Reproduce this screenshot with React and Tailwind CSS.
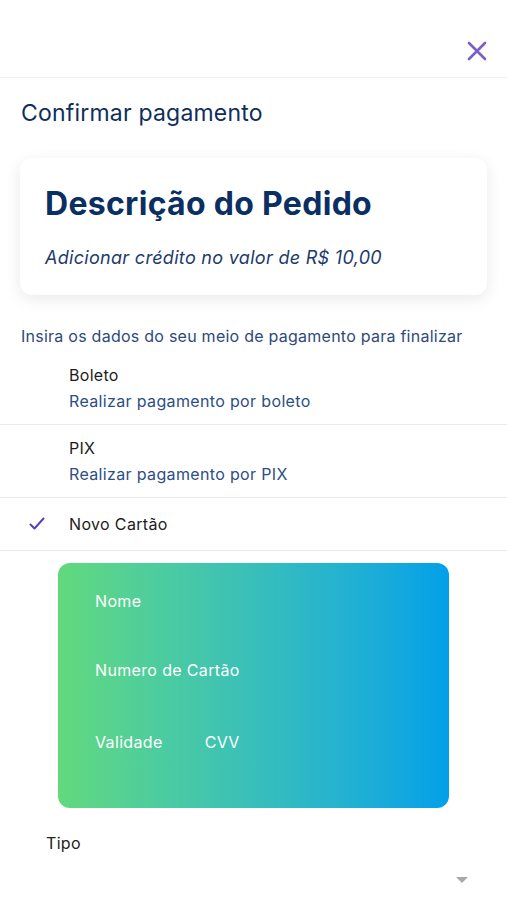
import React from 'react';

const methods = [
  { title: 'Boleto', sub: 'Realizar pagamento por boleto' },
  { title: 'PIX', sub: 'Realizar pagamento por PIX' },
];

const App = () => {
  return (
    <div className="min-h-screen bg-white font-['Inter',sans-serif] w-[507px] overflow-hidden">
      {/* Header */}
      <div className="h-[78px] flex items-end justify-end pr-[20px] pb-[16px] border-b border-[#eef0f2]">
        <svg width="20" height="20" viewBox="0 0 20 20" className="text-[#7a5fc8]">
          <path d="M2 2 L18 18 M18 2 L2 18" stroke="currentColor" strokeWidth="2.6" strokeLinecap="round" />
        </svg>
      </div>

      <h1 className="pt-[21px] px-[21px] text-[23px] leading-[28px] tracking-[0.2px] text-[#0e2f5c]">Confirmar pagamento</h1>

      {/* Order card */}
      <div className="mt-[31px] mx-[20px] rounded-[12px] bg-white shadow-[0_4px_16px_rgba(0,0,0,0.09)] pt-[28px] pb-[25px] px-[25px]">
        <h2 className="text-[32px] leading-[36px] font-bold tracking-[0.3px] text-[#0b2f63]">Descrição do Pedido</h2>
        <p className="mt-[24px] text-[18px] leading-[24px] italic tracking-[0.3px] text-[#1d3a6c]">Adicionar crédito no valor de R$ 10,00</p>
      </div>

      <p className="mt-[29px] px-[21px] text-[16px] leading-[24px] tracking-[0.25px] text-[#2d4a7b]">
        Insira os dados do seu meio de pagamento para finalizar
      </p>

      <div className="mt-[4px]">
        {methods.map((m) => (
          <div key={m.title} className="py-[10px] pl-[69px] border-b border-[#e8eaed]">
            <div className="text-[16px] leading-[26px] tracking-[0.3px] text-[#1c1c1c]">{m.title}</div>
            <div className="text-[16px] leading-[26px] tracking-[0.35px] text-[#2c4e85]">{m.sub}</div>
          </div>
        ))}
        <div className="flex items-center h-[53px] border-b border-[#e8eaed]">
          <div className="w-[69px] flex justify-center pl-[4px]">
            <svg width="16" height="14" viewBox="0 0 16 14" className="text-[#5b3fb8]">
              <path d="M1.5 7.5 L5.5 11.5 L14.5 1.5" fill="none" stroke="currentColor" strokeWidth="2" strokeLinecap="round" strokeLinejoin="round" />
            </svg>
          </div>
          <span className="text-[16px] leading-[26px] tracking-[0.35px] text-[#1c1c1c]">Novo Cartão</span>
        </div>
      </div>

      {/* Credit card */}
      <div className="mt-[12px] ml-[58px] w-[391px] h-[245px] rounded-[12px] bg-gradient-to-r from-[#62d97c] to-[#02a0e9] pl-[37px] pt-[26px] text-white text-[16px] leading-[24px] tracking-[0.35px]">
        <div>Nome</div>
        <div className="mt-[45px]">Numero de Cartão</div>
        <div className="mt-[48px] flex gap-[42px]">
          <span>Validade</span>
          <span>CVV</span>
        </div>
      </div>

      <div className="mt-[23px] pl-[46px] text-[16px] leading-[24px] tracking-[0.3px] text-[#222]">Tipo</div>
      <div className="flex justify-end pr-[39px] mt-[22px]">
        <div className="w-0 h-0 border-l-[6px] border-r-[6px] border-t-[6px] border-l-transparent border-r-transparent border-t-[#a9a9a9]" />
      </div>
    </div>
  );
};

export default App;
